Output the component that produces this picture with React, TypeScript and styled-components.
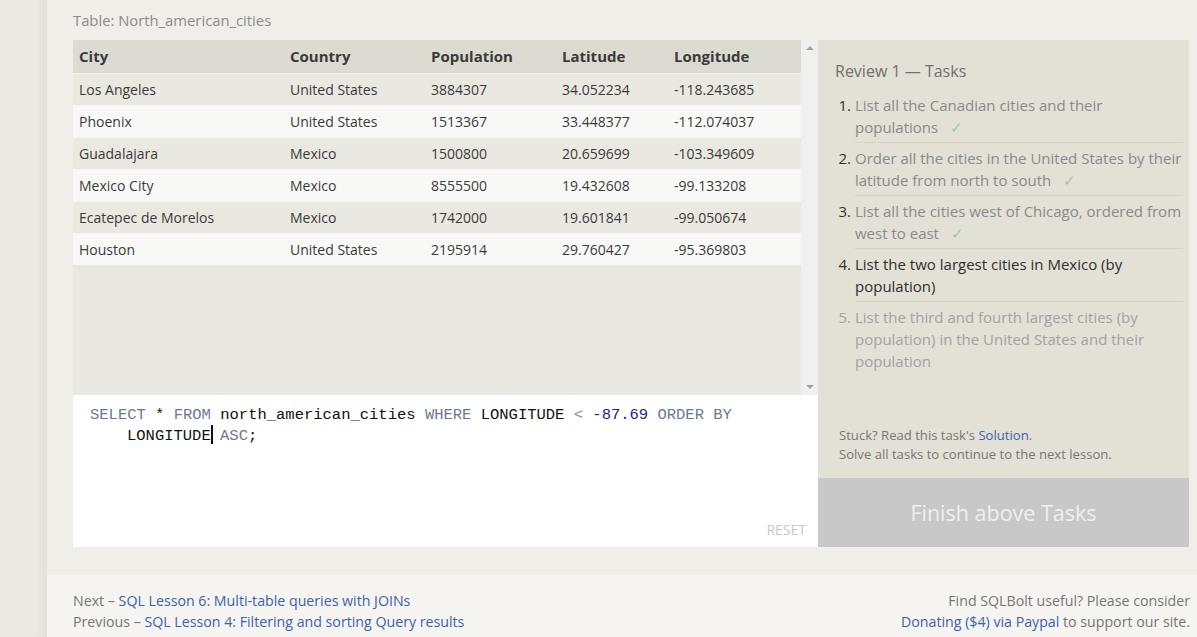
import styled, { createGlobalStyle } from 'styled-components';

const GlobalStyle = createGlobalStyle`
  html, body {
    margin: 0;
    padding: 0;
    background: #ebe9e4;
    font-family: "Open Sans", "Noto Sans", sans-serif;
  }
`;

const cities = [
  ['Los Angeles', 'United States', '3884307', '34.052234', '-118.243685'],
  ['Phoenix', 'United States', '1513367', '33.448377', '-112.074037'],
  ['Guadalajara', 'Mexico', '1500800', '20.659699', '-103.349609'],
  ['Mexico City', 'Mexico', '8555500', '19.432608', '-99.133208'],
  ['Ecatepec de Morelos', 'Mexico', '1742000', '19.601841', '-99.050674'],
  ['Houston', 'United States', '2195914', '29.760427', '-95.369803'],
];

type TaskState = 'done' | 'current' | 'todo';

const tasks: { text: string; state: TaskState }[] = [
  { text: 'List all the Canadian cities and their populations', state: 'done' },
  { text: 'Order all the cities in the United States by their latitude from north to south', state: 'done' },
  { text: 'List all the cities west of Chicago, ordered from west to east', state: 'done' },
  { text: 'List the two largest cities in Mexico (by population)', state: 'current' },
  { text: 'List the third and fourth largest cities (by population) in the United States and their population', state: 'todo' },
];

export default () => {
  return (
    <>
      <GlobalStyle />
      <Page>
        <Gutter />
        <Main>
          <Content>
            <TableTitle>Table: North_american_cities</TableTitle>
            <Workspace>
              <LeftCol>
                <TableArea>
                  <TableScroll>
                    <Table>
                      <thead>
                        <tr>
                          <Th style={{ width: 211 }}>City</Th>
                          <Th style={{ width: 141 }}>Country</Th>
                          <Th style={{ width: 131 }}>Population</Th>
                          <Th style={{ width: 112 }}>Latitude</Th>
                          <Th>Longitude</Th>
                        </tr>
                      </thead>
                      <tbody>
                        {cities.map((row, i) => (
                          <Tr key={i} $odd={i % 2 === 0}>
                            {row.map((c, j) => (
                              <Td key={j}>{c}</Td>
                            ))}
                          </Tr>
                        ))}
                      </tbody>
                    </Table>
                  </TableScroll>
                  <Scrollbar>
                    <Arrow $up />
                    <Arrow />
                  </Scrollbar>
                </TableArea>
                <Editor>
                  <Code>
                    <CodeLine>
                      <Kw>SELECT</Kw> * <Kw>FROM</Kw> north_american_cities <Kw>WHERE</Kw> LONGITUDE{' '}
                      <Op>&lt;</Op> <Num>-87.69</Num> <Kw>ORDER BY</Kw>
                    </CodeLine>
                    <CodeLine $wrapped>
                      LONGITUDE<Cursor /> <Kw>ASC</Kw>;
                    </CodeLine>
                  </Code>
                  <Reset>RESET</Reset>
                </Editor>
              </LeftCol>
              <RightCol>
                <TaskPanel>
                  <TaskHeading>Review 1 — Tasks</TaskHeading>
                  <TaskList>
                    {tasks.map((t, i) => (
                      <TaskItem key={i} $state={t.state} $last={i === tasks.length - 1}>
                        <TaskNum $state={t.state}>{i + 1}.</TaskNum>
                        <TaskText>
                          {t.text}
                          {t.state === 'done' && <Check>✓</Check>}
                        </TaskText>
                      </TaskItem>
                    ))}
                  </TaskList>
                  <Hint>
                    <div>
                      Stuck? Read this task's <Link>Solution</Link>.
                    </div>
                    <div>Solve all tasks to continue to the next lesson.</div>
                  </Hint>
                </TaskPanel>
                <FinishButton>Finish above Tasks</FinishButton>
              </RightCol>
            </Workspace>
          </Content>
          <Footer>
            <FooterLeft>
              <div>
                Next – <Link>SQL Lesson 6: Multi-table queries with JOINs</Link>
              </div>
              <div>
                Previous – <Link>SQL Lesson 4: Filtering and sorting Query results</Link>
              </div>
            </FooterLeft>
            <FooterRight>
              <div>Find SQLBolt useful? Please consider</div>
              <div>
                <Link>Donating ($4) via Paypal</Link> to support our site.
              </div>
            </FooterRight>
          </Footer>
        </Main>
      </Page>
    </>
  );
};

const Page = styled.div`
  display: flex;
  min-height: 637px;
`;

const Gutter = styled.div`
  width: 47px;
  flex: none;
  background: linear-gradient(to right, #ebe9e4 0, #ebe9e4 36px, #e2e0db 47px);
`;

const Main = styled.div`
  flex: 1;
  display: flex;
  flex-direction: column;
  background: #f0eee8;
`;

const Content = styled.div`
  padding: 10px 8px 28px 26px;
`;

const TableTitle = styled.div`
  color: #8c8c8c;
  font-size: 14.8px;
  line-height: 21px;
  margin-bottom: 9px;
`;

const Workspace = styled.div`
  display: grid;
  grid-template-columns: 745px 371px;
`;

const LeftCol = styled.div`
  display: flex;
  flex-direction: column;
`;

const TableArea = styled.div`
  display: flex;
  height: 355px;
  background: #e9e8e1;
`;

const TableScroll = styled.div`
  flex: 1;
`;

const Table = styled.table`
  width: 100%;
  border-collapse: collapse;
  font-size: 14px;
  color: #333;
`;

const Th = styled.th`
  text-align: left;
  background: #dcdbd2;
  height: 33px;
  padding: 0 6px;
  font-weight: 700;
  font-size: 15px;
  color: #3a3a3a;
  box-sizing: border-box;
`;

const Tr = styled.tr<{ $odd: boolean }>`
  background: ${(p) => (p.$odd ? '#e9e8e1' : '#f8f8f7')};
  border-top: 1px solid #f6f5f1;
`;

const Td = styled.td`
  height: 31px;
  padding: 0 6px;
  color: #3b3b3b;
`;

const Scrollbar = styled.div`
  width: 17px;
  flex: none;
  background: #f0f0f0;
  display: flex;
  flex-direction: column;
  justify-content: space-between;
  align-items: center;
  padding: 6px 0;
  box-sizing: border-box;
`;

const Arrow = styled.div<{ $up?: boolean }>`
  width: 0;
  height: 0;
  border-left: 4px solid transparent;
  border-right: 4px solid transparent;
  ${(p) => (p.$up ? 'border-bottom: 4px solid #a3a3a3;' : 'border-top: 4px solid #a3a3a3;')}
`;

const Editor = styled.div`
  position: relative;
  height: 152px;
  background: #fff;
  box-sizing: border-box;
  padding: 10px 17px;
`;

const Code = styled.div`
  font-family: "Liberation Mono", "DejaVu Sans Mono", monospace;
  font-size: 15.5px;
  line-height: 20px;
  color: #111;
`;

const CodeLine = styled.div<{ $wrapped?: boolean }>`
  white-space: pre;
  padding-left: ${(p) => (p.$wrapped ? '37px' : '0')};
`;

const Kw = styled.span`
  color: #6a7895;
`;

const Op = styled.span`
  color: #8a8a8a;
`;

const Num = styled.span`
  color: #1d1f96;
`;

const Cursor = styled.span`
  display: inline-block;
  width: 2px;
  height: 19px;
  margin-right: -2px;
  background: #111;
  vertical-align: -4px;
`;

const Reset = styled.div`
  position: absolute;
  right: 12px;
  bottom: 8px;
  font-size: 14px;
  color: #c8c8c8;
`;

const RightCol = styled.div`
  display: flex;
  flex-direction: column;
`;

const TaskPanel = styled.div`
  flex: 1;
  background: #e3e0d6;
  padding: 19px 6px 14px 17px;
  display: flex;
  flex-direction: column;
`;

const TaskHeading = styled.div`
  font-size: 16px;
  line-height: 24px;
  color: #707070;
  margin-bottom: 11px;
`;

const TaskList = styled.ol`
  list-style: none;
  margin: 0;
  padding: 0;
  flex: 1;
`;

const taskColor = { done: '#8a8a8a', current: '#2f2f2f', todo: '#a3a3a3' };

const TaskItem = styled.li<{ $state: TaskState; $last: boolean }>`
  display: flex;
  font-size: 15px;
  line-height: 22px;
  color: ${(p) => taskColor[p.$state]};
  padding-bottom: 5px;
  margin-bottom: 4px;
  position: relative;
  &::after {
    content: '';
    display: ${(p) => (p.$last ? 'none' : 'block')};
    position: absolute;
    left: 20px;
    right: 0;
    bottom: 0;
    border-bottom: 1px solid #d5d2c8;
  }
`;

const TaskNum = styled.span<{ $state: TaskState }>`
  width: 20px;
  flex: none;
  text-align: right;
  padding-right: 4px;
  box-sizing: border-box;
  color: ${(p) => (p.$state === 'todo' ? '#a3a3a3' : '#333')};
`;

const TaskText = styled.span`
  flex: 1;
`;

const Check = styled.span`
  color: #9ccc9c;
  margin-left: 12px;
`;

const Hint = styled.div`
  font-size: 13.1px;
  line-height: 19px;
  color: #777;
  padding-left: 4px;
`;

const Link = styled.span`
  color: #3b63b0;
`;

const FinishButton = styled.div`
  height: 69px;
  background: #c8c8c8;
  color: #efefef;
  font-size: 21.5px;
  display: flex;
  align-items: center;
  justify-content: center;
`;

const Footer = styled.div`
  flex: 1;
  background: #f5f4f0;
  display: flex;
  justify-content: space-between;
  padding: 15px 7px 0 26px;
  font-size: 14.2px;
  line-height: 21px;
  color: #777;
`;

const FooterLeft = styled.div``;

const FooterRight = styled.div`
  text-align: right;
`;
